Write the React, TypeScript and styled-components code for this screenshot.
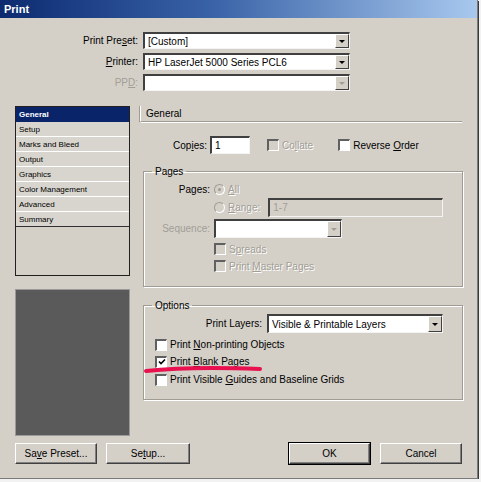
import styled, { createGlobalStyle } from "styled-components";

const GlobalStyle = createGlobalStyle`
  html, body {
    margin: 0;
    padding: 0;
    background: #f2f2f2;
  }
  body {
    font-family: "Liberation Sans", Arial, sans-serif;
    font-size: 10px;
    color: #000;
  }
`;

const Window = styled.div`
  width: 477px;
  height: 478px;
  background: #d4d0c8;
  border-right: 1px solid #7a7a7a;
  border-bottom: 1px solid #7a7a7a;
  box-shadow: 1px 1px 0 #3a3a3a;
  display: flex;
  flex-direction: column;
  position: relative;
  overflow: hidden;
`;

const TitleBar = styled.div`
  height: 18px;
  background: linear-gradient(90deg, #0c2a70 0%, #3a64a8 45%, #a8c8ee 100%);
  color: #fff;
  font-weight: bold;
  font-size: 11px;
  display: flex;
  align-items: center;
  padding-left: 4px;
`;

const TopFields = styled.div`
  margin-top: 14px;
  display: grid;
  grid-template-columns: 143px 207px;
  row-gap: 4px;
`;

const Label = styled.label<{ $disabled?: boolean }>`
  display: flex;
  align-items: center;
  justify-content: flex-end;
  padding-right: 5px;
  color: ${(p) => (p.$disabled ? "#a29e96" : "#000")};
  white-space: nowrap;
`;

const Field = styled.div<{ $w?: number; $h?: number; $grey?: boolean; $ml?: number }>`
  box-sizing: border-box;
  width: ${(p) => (p.$w ? `${p.$w}px` : "100%")};
  height: ${(p) => p.$h ?? 17}px;
  margin-left: ${(p) => p.$ml ?? 0}px;
  background: ${(p) => (p.$grey ? "#d4d0c8" : "#fff")};
  border-top: 2px solid #404040;
  border-left: 2px solid #404040;
  border-right: 1px solid #f4f4f4;
  border-bottom: 1px solid #f4f4f4;
  display: flex;
  align-items: center;
  padding-left: 3px;
  white-space: nowrap;
  overflow: hidden;
  color: ${(p) => (p.$grey ? "#a29e96" : "#000")};
`;

const ComboText = styled.span`
  flex: 1;
  overflow: hidden;
`;

const DropBtn = styled.div<{ $disabled?: boolean }>`
  box-sizing: border-box;
  width: 14px;
  height: 100%;
  background: #d4d0c8;
  border-top: 1px solid #fff;
  border-left: 1px solid #fff;
  border-right: 1px solid #404040;
  border-bottom: 1px solid #404040;
  display: flex;
  align-items: center;
  justify-content: center;
  &::after {
    content: "";
    border-left: 3px solid transparent;
    border-right: 3px solid transparent;
    border-top: 3px solid ${(p) => (p.$disabled ? "#a29e96" : "#000")};
  }
`;

const Main = styled.div`
  margin-top: 15px;
  display: flex;
  padding-left: 15px;
`;

const LeftCol = styled.div`
  width: 115px;
  display: flex;
  flex-direction: column;
  gap: 13px;
`;

const NavList = styled.ul`
  box-sizing: border-box;
  height: 170px;
  margin: 0;
  padding: 0;
  list-style: none;
  border: 1px solid #202020;
  background: #d4d0c8;
`;

const NavItem = styled.li<{ $active?: boolean }>`
  height: 15px;
  box-sizing: border-box;
  padding-left: 3px;
  display: flex;
  align-items: center;
  font-size: 8px;
  border-bottom: 1px solid ${(p) => (p.$active ? "#0a246a" : "#fff")};
  background: ${(p) => (p.$active ? "#0a246a" : "#d8d5ce")};
  color: ${(p) => (p.$active ? "#fff" : "#000")};
  font-weight: ${(p) => (p.$active ? "bold" : "normal")};
  &:last-child {
    border-bottom: 1px solid #303030;
  }
`;

const Preview = styled.div`
  height: 147px;
  background: #5a5a5a;
  border: 1px solid #9a9a9a;
  box-sizing: border-box;
`;

const RightCol = styled.div`
  margin-left: 10px;
  width: 322px;
  display: flex;
  flex-direction: column;
`;

const SectionHead = styled.div`
  height: 16px;
  box-sizing: border-box;
  border-left: 1px solid #fff;
  box-shadow: -1px 0 0 #a09c94;
  border-bottom: 1px solid #a09c94;
  padding-left: 5px;
  display: flex;
  align-items: center;
  font-size: 10px;
  position: relative;
  &::after {
    content: "";
    position: absolute;
    left: 0;
    right: 0;
    bottom: -2px;
    height: 1px;
    background: #fff;
  }
`;

const CopiesRow = styled.div`
  margin-top: 14px;
  height: 18px;
  display: flex;
  align-items: center;
`;

const CopiesLabel = styled(Label)`
  width: 70px;
  box-sizing: border-box;
  height: 100%;
  padding-right: 3px;
`;

const Group = styled.fieldset<{ $h: number; $mt: number }>`
  margin: ${(p) => p.$mt}px 0 0 3px;
  width: 320px;
  height: ${(p) => p.$h}px;
  box-sizing: border-box;
  border: 1px solid #a09c94;
  box-shadow: inset 1px 1px 0 #fff, 1px 1px 0 #fff;
  padding: 0;
  min-width: 0;
`;

const Legend = styled.legend`
  margin-left: 8px;
  padding: 0 3px;
  font-size: 10px;
`;

const GroupGrid = styled.div`
  display: grid;
  grid-template-columns: 66px 1fr;
  column-gap: 4px;
  padding-top: 4px;
`;

const RowLabel = styled(Label)<{ $mt?: number }>`
  padding-right: 0;
  margin-top: ${(p) => p.$mt ?? 0}px;
`;

const Cell = styled.div<{ $h: number; $mt?: number; $ml?: number }>`
  height: ${(p) => p.$h}px;
  margin-top: ${(p) => p.$mt ?? 0}px;
  margin-left: ${(p) => p.$ml ?? 0}px;
  display: flex;
  align-items: center;
  gap: 3px;
`;

const Check = styled.span<{ $disabled?: boolean }>`
  box-sizing: border-box;
  width: 12px;
  height: 12px;
  flex: none;
  background: ${(p) => (p.$disabled ? "#d4d0c8" : "#fff")};
  border-top: 2px solid #606060;
  border-left: 2px solid #606060;
  border-right: 1px solid #fff;
  border-bottom: 1px solid #fff;
  display: flex;
  align-items: center;
  justify-content: center;
`;

const Radio = styled.span<{ $checked?: boolean }>`
  box-sizing: border-box;
  width: 11px;
  height: 11px;
  flex: none;
  border-radius: 50%;
  background: #d4d0c8;
  border: 1px solid #a09c94;
  border-right-color: #fff;
  border-bottom-color: #fff;
  display: flex;
  align-items: center;
  justify-content: center;
  &::after {
    content: "";
    width: 3px;
    height: 3px;
    border-radius: 50%;
    background: ${(p) => (p.$checked ? "#a09c94" : "transparent")};
  }
`;

const Text = styled.span<{ $disabled?: boolean }>`
  color: ${(p) => (p.$disabled ? "#a29e96" : "#000")};
  text-shadow: ${(p) => (p.$disabled ? "1px 1px 0 #fff" : "none")};
  white-space: nowrap;
`;

const OptionsGrid = styled.div`
  padding-top: 3px;
  display: flex;
  flex-direction: column;
`;

const LayersRow = styled.div`
  height: 19px;
  display: flex;
  align-items: center;
  margin-bottom: 3px;
`;

const LayersLabel = styled(Label)`
  width: 123px;
  box-sizing: border-box;
  padding-right: 5px;
`;

const CheckRow = styled.div<{ $h: number }>`
  height: ${(p) => p.$h}px;
  display: flex;
  align-items: center;
  gap: 3px;
  padding-left: 11px;
`;

const Footer = styled.div`
  margin-top: 7px;
  padding: 0 15px;
  display: flex;
  align-items: center;
`;

const Button = styled.button<{ $w: number; $ml?: number; $default?: boolean }>`
  box-sizing: border-box;
  width: ${(p) => p.$w}px;
  height: 21px;
  margin-left: ${(p) => p.$ml ?? 0}px;
  font-family: inherit;
  font-size: 10px;
  background: #d4d0c8;
  color: #000;
  padding: 0;
  border-top: 1px solid #fff;
  border-left: 1px solid #fff;
  border-right: 1px solid #404040;
  border-bottom: 1px solid #404040;
  box-shadow: ${(p) =>
    p.$default
      ? "0 0 0 1px #000, inset -1px -1px 0 #808080"
      : "inset -1px -1px 0 #808080"};
`;

const Spacer = styled.div`
  flex: 1;
`;

const RedMark = styled.svg`
  position: absolute;
  left: 143px;
  top: 364px;
  pointer-events: none;
`;

export default function App() {
  return (
    <>
      <GlobalStyle />
      <Window>
        <TitleBar>Print</TitleBar>

        <TopFields>
          <Label>Print Pre<u>s</u>et:</Label>
          <Field>
            <ComboText>[Custom]</ComboText>
            <DropBtn />
          </Field>
          <Label>
            <u>P</u>rinter:
          </Label>
          <Field>
            <ComboText>HP LaserJet 5000 Series PCL6</ComboText>
            <DropBtn />
          </Field>
          <Label $disabled>
            PP<u>D</u>:
          </Label>
          <Field>
            <ComboText />
            <DropBtn $disabled />
          </Field>
        </TopFields>

        <Main>
          <LeftCol>
            <NavList>
              <NavItem $active>General</NavItem>
              <NavItem>Setup</NavItem>
              <NavItem>Marks and Bleed</NavItem>
              <NavItem>Output</NavItem>
              <NavItem>Graphics</NavItem>
              <NavItem>Color Management</NavItem>
              <NavItem>Advanced</NavItem>
              <NavItem>Summary</NavItem>
            </NavList>
            <Preview />
          </LeftCol>

          <RightCol>
            <SectionHead>General</SectionHead>

            <CopiesRow>
              <CopiesLabel>
                Cop<u>i</u>es:
              </CopiesLabel>
              <Field $w={40} $h={18}>
                1
              </Field>
              <Cell $h={18} $ml={17}>
                <Check $disabled />
                <Text $disabled>
                  Co<u>l</u>late
                </Text>
              </Cell>
              <Cell $h={18} $ml={25}>
                <Check />
                <Text>
                  Reverse <u>O</u>rder
                </Text>
              </Cell>
            </CopiesRow>

            <Group $h={121} $mt={12}>
              <Legend>Pages</Legend>
              <GroupGrid>
                <RowLabel>Pages:</RowLabel>
                <Cell $h={16}>
                  <Radio $checked />
                  <Text $disabled>
                    <u>A</u>ll
                  </Text>
                </Cell>
                <div />
                <Cell $h={20}>
                  <Radio />
                  <Text $disabled>
                    <u>R</u>ange:
                  </Text>
                  <Field $w={175} $h={19} $grey $ml={5}>
                    1-7
                  </Field>
                </Cell>
                <RowLabel $disabled $mt={2}>
                  Sequence:
                </RowLabel>
                <Cell $h={19} $mt={2}>
                  <Field $w={128} $h={19}>
                    <ComboText />
                    <DropBtn $disabled />
                  </Field>
                </Cell>
                <div />
                <Cell $h={16} $mt={3}>
                  <Check $disabled />
                  <Text $disabled>
                    S<u>p</u>reads
                  </Text>
                </Cell>
                <div />
                <Cell $h={18}>
                  <Check $disabled />
                  <Text $disabled>
                    Print <u>M</u>aster Pages
                  </Text>
                </Cell>
              </GroupGrid>
            </Group>

            <Group $h={100} $mt={13}>
              <Legend>Options</Legend>
              <OptionsGrid>
                <LayersRow>
                  <LayersLabel>Print Layers:</LayersLabel>
                  <Field $w={176} $h={19}>
                    <ComboText>Visible &amp; Printable Layers</ComboText>
                    <DropBtn />
                  </Field>
                </LayersRow>
                <CheckRow $h={17}>
                  <Check />
                  <Text>
                    Print <u>N</u>on-printing Objects
                  </Text>
                </CheckRow>
                <CheckRow $h={17}>
                  <Check>
                    <svg width="8" height="8" viewBox="0 0 8 8">
                      <path d="M1 3.5 L3 5.5 L7 1.5" stroke="#000" strokeWidth="1.6" fill="none" />
                    </svg>
                  </Check>
                  <Text>
                    Print <u>B</u>lank Pages
                  </Text>
                </CheckRow>
                <CheckRow $h={19}>
                  <Check />
                  <Text>
                    Print Visible <u>G</u>uides and Baseline Grids
                  </Text>
                </CheckRow>
              </OptionsGrid>
            </Group>
          </RightCol>
        </Main>

        <Footer>
          <Button $w={82}>
            Sa<u>v</u>e Preset...
          </Button>
          <Button $w={84} $ml={9}>
            Se<u>t</u>up...
          </Button>
          <Spacer />
          <Button $w={81} $default>
            OK
          </Button>
          <Button $w={82} $ml={10}>
            Cancel
          </Button>
        </Footer>

        <RedMark width="122" height="12" viewBox="0 0 122 12">
          <path
            d="M3 7 C 30 4, 70 3, 117 5"
            stroke="#e8104f"
            strokeWidth="4"
            strokeLinecap="round"
            fill="none"
          />
        </RedMark>
      </Window>
    </>
  );
}
